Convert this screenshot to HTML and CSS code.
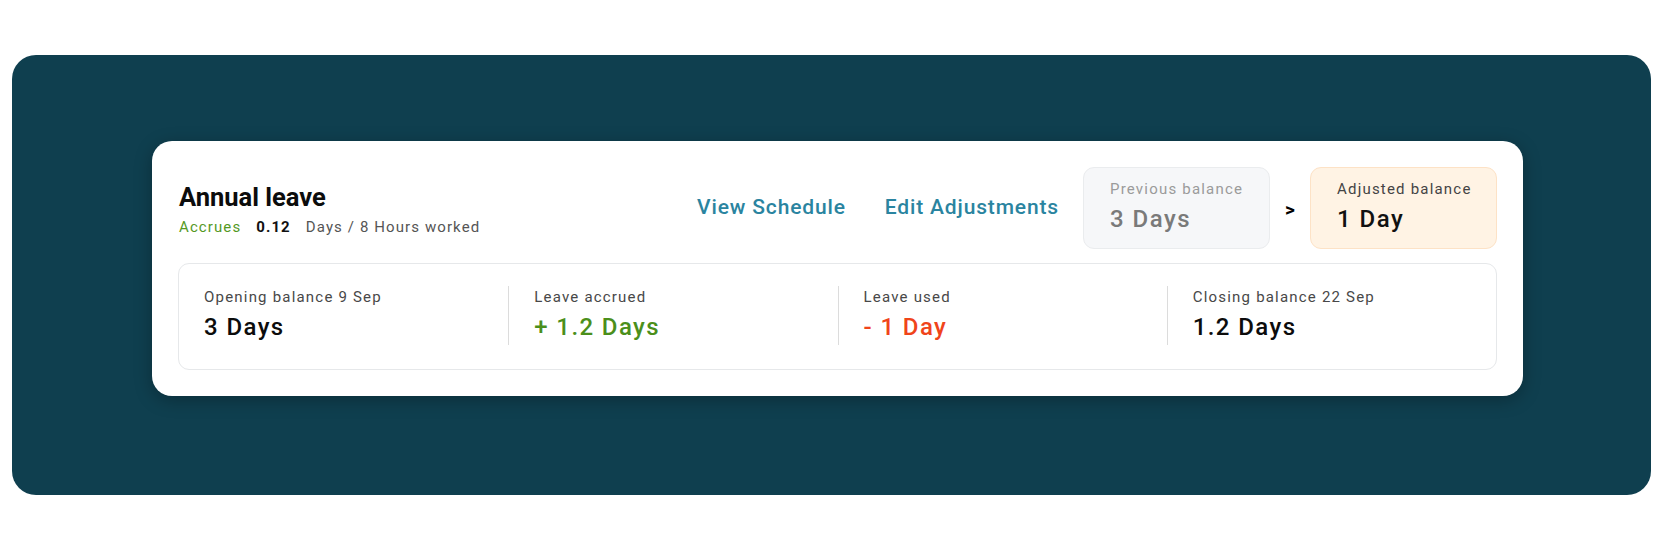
FILE: index.html
```html
<!DOCTYPE html>
<html lang="en">
<head>
<meta charset="utf-8">
<title>Annual leave</title>
<link rel="stylesheet" href="styles.css">
</head>
<body>
<div class="page">
  <section class="panel">
    <div class="card">
      <div class="top">
        <div class="heading">
          <h1 class="title">Annual leave</h1>
          <div class="sub">
            <span class="accrues">Accrues</span>
            <span class="rate">0.12</span>
            <span class="unit">Days / 8 Hours worked</span>
          </div>
        </div>
        <div class="links">
          <a class="link" href="#">View Schedule</a>
          <a class="link" href="#">Edit Adjustments</a>
        </div>
        <div class="balances">
          <div class="bal bal-prev">
            <div class="bal-label">Previous balance</div>
            <div class="bal-value">3 Days</div>
          </div>
          <div class="arrow">&gt;</div>
          <div class="bal bal-adj">
            <div class="bal-label">Adjusted balance</div>
            <div class="bal-value">1 Day</div>
          </div>
        </div>
      </div>
      <div class="stats">
        <div class="stat">
          <div class="stat-label">Opening balance 9 Sep</div>
          <div class="stat-value">3 Days</div>
        </div>
        <div class="stat">
          <div class="stat-label">Leave accrued</div>
          <div class="stat-value green">+ 1.2 Days</div>
        </div>
        <div class="stat">
          <div class="stat-label">Leave used</div>
          <div class="stat-value red">- 1 Day</div>
        </div>
        <div class="stat">
          <div class="stat-label">Closing balance 22 Sep</div>
          <div class="stat-value">1.2 Days</div>
        </div>
      </div>
    </div>
  </section>
</div>
</body>
</html>
```
FILE: styles.css
```css
* { box-sizing: border-box; }
html, body { margin: 0; padding: 0; background: #ffffff; }
body { font-family: Roboto, "Liberation Sans", sans-serif; color: #111; }

.page { padding: 55px 25px 41px 12px; }

.panel {
  background: #0f3f4f;
  border-radius: 24px;
  padding: 86px 128px 99px 140px;
}

.card {
  background: #ffffff;
  border-radius: 20px;
  padding: 26px 26px 26px 26px;
  box-shadow: 0 4px 18px rgba(0, 0, 0, 0.28);
}

.top {
  display: flex;
  align-items: center;
}

.heading { flex: 1; padding-left: 1px; padding-top: 2px; }

.title {
  margin: 0;
  font-size: 25.5px;
  font-weight: 700;
  line-height: 30px;
  color: #0c0c0c;
}

.sub {
  display: flex;
  gap: 15px;
  font-size: 15px;
  letter-spacing: 1.1px;
  line-height: 18px;
  margin-top: 6px;
  color: #555;
}
.accrues { color: #55991f; }
.rate { font-weight: 700; color: #111; }

.links {
  display: flex;
  gap: 39px;
  margin-right: 24px;
  padding-bottom: 2px;
}
.link {
  font-size: 21px;
  font-weight: 500;
  letter-spacing: 0.85px;
  color: #2a84a0;
  text-decoration: none;
}

.balances { display: flex; align-items: center; }

.bal {
  width: 187px;
  height: 82px;
  border-radius: 11px;
  padding: 12px 16px 0 26px;
}
.bal-prev { background: #f6f7f9; border: 1px solid #eaecee; }
.bal-adj { background: #fff3e4; border: 1px solid #fde2c6; }

.bal-label {
  font-size: 15px;
  letter-spacing: 1.2px;
  line-height: 18px;
  color: #444;
  white-space: nowrap;
}
.bal-value {
  font-size: 24px;
  font-weight: 500;
  letter-spacing: 1.5px;
  line-height: 28px;
  margin-top: 7px;
  color: #111;
}
.bal-prev .bal-label { color: #9b9b9b; }
.bal-prev .bal-value { color: #7a7a7a; }

.arrow {
  width: 40px;
  text-align: center;
  font-size: 19px;
  font-weight: 700;
  color: #000;
  padding-top: 2px;
}

.stats {
  display: grid;
  grid-template-columns: repeat(4, 1fr);
  margin-top: 14px;
  border: 1.5px solid #e6e8ea;
  border-radius: 11px;
  padding: 22px 0 24px;
}

.stat {
  padding: 2px 25px 4px;
  border-left: 1px solid #dcdcdc;
}
.stat:first-child { border-left: none; }

.stat-label {
  font-size: 15px;
  letter-spacing: 1.2px;
  line-height: 18px;
  color: #484848;
}
.stat-value {
  font-size: 24px;
  font-weight: 500;
  letter-spacing: 1.4px;
  line-height: 28px;
  margin-top: 7px;
  color: #0c0c0c;
}
.green { color: #4b8f1b; }
.red { color: #f0441a; }
```
